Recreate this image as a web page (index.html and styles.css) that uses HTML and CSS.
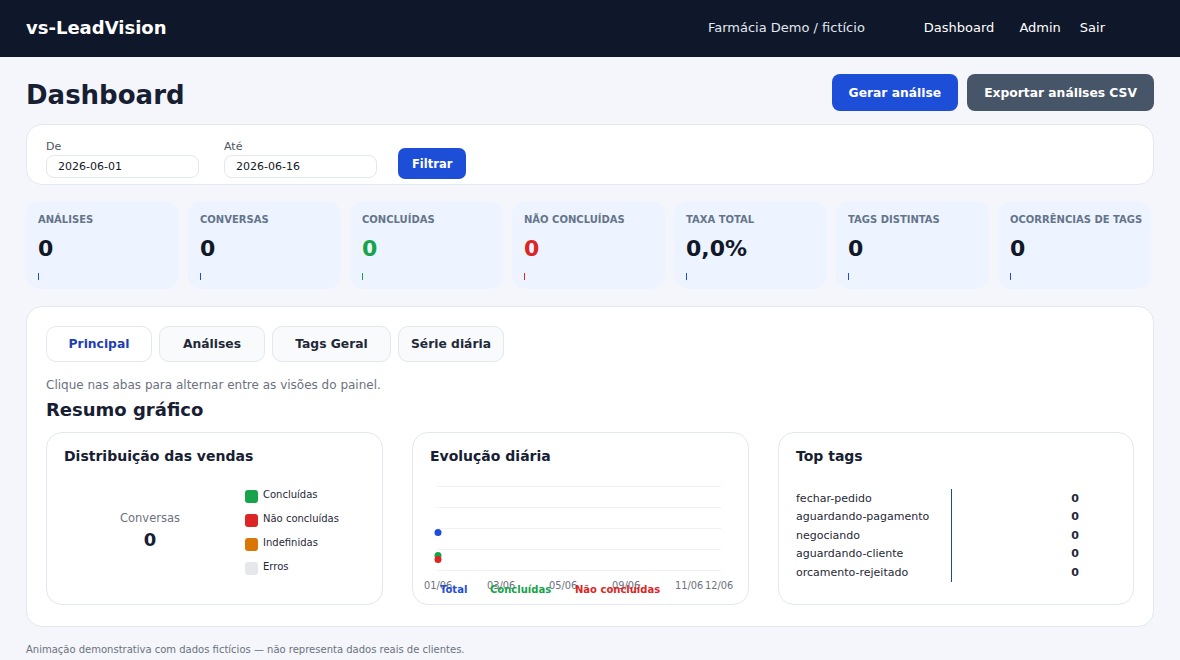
FILE: index.html
```html
<!DOCTYPE html>
<html lang="pt-BR">
<head>
    <meta charset="UTF-8">
    <meta name="viewport" content="width=device-width, initial-scale=1.0">
    <title>vs-LeadVision - Dashboard</title>
    <link rel="stylesheet" href="styles.css">
</head>
<body>
    <header class="topbar">
        <div class="brand">vs-LeadVision</div>
        <div class="tenant">Farmácia Demo / fictício</div>
        <nav class="nav">
            <a href="#">Dashboard</a>
            <a href="#">Admin</a>
            <a href="#">Sair</a>
        </nav>
    </header>

    <main class="page">
        <div class="page-head">
            <h1>Dashboard</h1>
            <div class="actions">
                <button class="btn btn-primary">Gerar análise</button>
                <button class="btn btn-dark">Exportar análises CSV</button>
            </div>
        </div>

        <form class="card filter">
            <label class="field">
                <span>De</span>
                <input type="text" value="2026-06-01">
            </label>
            <label class="field">
                <span>Até</span>
                <input type="text" value="2026-06-16">
            </label>
            <button type="button" class="btn btn-primary btn-sm">Filtrar</button>
        </form>

        <section class="stats">
            <div class="stat"><div class="stat-label">Análises</div><div class="stat-value">0</div><div class="tick blue"></div></div>
            <div class="stat"><div class="stat-label">Conversas</div><div class="stat-value">0</div><div class="tick blue"></div></div>
            <div class="stat"><div class="stat-label">Concluídas</div><div class="stat-value green">0</div><div class="tick green-bg"></div></div>
            <div class="stat"><div class="stat-label">Não concluídas</div><div class="stat-value red">0</div><div class="tick red-bg"></div></div>
            <div class="stat"><div class="stat-label">Taxa total</div><div class="stat-value">0,0%</div><div class="tick blue"></div></div>
            <div class="stat"><div class="stat-label">Tags distintas</div><div class="stat-value">0</div><div class="tick blue"></div></div>
            <div class="stat"><div class="stat-label">Ocorrências de tags</div><div class="stat-value">0</div><div class="tick blue"></div></div>
        </section>

        <section class="card panel">
            <div class="tabs">
                <button class="tab active">Principal</button>
                <button class="tab">Análises</button>
                <button class="tab tab-wide">Tags Geral</button>
                <button class="tab">Série diária</button>
            </div>
            <p class="hint">Clique nas abas para alternar entre as visões do painel.</p>
            <h2>Resumo gráfico</h2>

            <div class="charts">
                <div class="chart-card">
                    <h3>Distribuição das vendas</h3>
                    <div class="donut">
                        <div class="donut-center">
                            <div class="donut-label">Conversas</div>
                            <div class="donut-value">0</div>
                        </div>
                        <ul class="legend">
                            <li><i class="sw c-green"></i>Concluídas</li>
                            <li><i class="sw c-red"></i>Não concluídas</li>
                            <li><i class="sw c-orange"></i>Indefinidas</li>
                            <li><i class="sw c-gray"></i>Erros</li>
                        </ul>
                    </div>
                </div>

                <div class="chart-card">
                    <h3>Evolução diária</h3>
                    <svg class="line-chart" width="320" height="120" viewBox="0 0 320 120">
                        <g stroke="#eef1f5" stroke-width="1">
                            <line x1="25" y1="5.5" x2="309" y2="5.5"/>
                            <line x1="25" y1="26.5" x2="309" y2="26.5"/>
                            <line x1="25" y1="47.5" x2="309" y2="47.5"/>
                            <line x1="25" y1="68.5" x2="309" y2="68.5"/>
                            <line x1="25" y1="89.5" x2="309" y2="89.5"/>
                        </g>
                        <circle cx="26" cy="51.5" r="3.5" fill="#1d4ed8"/>
                        <circle cx="26" cy="74.5" r="3.5" fill="#16a34a"/>
                        <circle cx="26" cy="78.5" r="3.5" fill="#dc2626"/>
                        <g font-family="DejaVu Sans, sans-serif" font-size="9.8" fill="#6b7280">
                            <text x="12" y="107.5">01/06</text>
                            <text x="75" y="107.5">03/06</text>
                            <text x="137" y="107.5">05/06</text>
                            <text x="200" y="107.5">09/06</text>
                            <text x="263" y="107.5">11/06</text>
                            <text x="293" y="107.5">12/06</text>
                        </g>
                        <g font-family="DejaVu Sans, sans-serif" font-size="10" font-weight="bold">
                            <text x="28" y="111.5" fill="#1d4ed8">Total</text>
                            <text x="78" y="111.5" fill="#16a34a">Concluídas</text>
                            <text x="163" y="111.5" fill="#dc2626">Não concluídas</text>
                        </g>
                    </svg>
                </div>

                <div class="chart-card">
                    <h3>Top tags</h3>
                    <ul class="tags">
                        <li><span class="tag-name">fechar-pedido</span><span class="tag-bar"></span><span class="tag-val">0</span></li>
                        <li><span class="tag-name">aguardando-pagamento</span><span class="tag-bar"></span><span class="tag-val">0</span></li>
                        <li><span class="tag-name">negociando</span><span class="tag-bar"></span><span class="tag-val">0</span></li>
                        <li><span class="tag-name">aguardando-cliente</span><span class="tag-bar"></span><span class="tag-val">0</span></li>
                        <li><span class="tag-name">orcamento-rejeitado</span><span class="tag-bar"></span><span class="tag-val">0</span></li>
                    </ul>
                </div>
            </div>
        </section>

        <p class="footnote">Animação demonstrativa com dados fictícios — não representa dados reais de clientes.</p>
    </main>
</body>
</html>
```

FILE: styles.css
```css
* { box-sizing: border-box; }
body {
    margin: 0;
    font-family: "DejaVu Sans", sans-serif;
    background: #f4f6fb;
    color: #111827;
}

/* top bar */
.topbar {
    height: 57px;
    background: #0f172a;
    color: #fff;
    display: flex;
    align-items: center;
    padding: 0 26px 2px;
}
.brand { font-size: 18px; font-weight: bold; }
.tenant { margin-left: auto; font-size: 13px; color: #e2e8f0; }
.nav { display: flex; margin-left: 59px; margin-right: 49px; }
.nav a { color: #fff; text-decoration: none; font-size: 13px; }
.nav a + a { margin-left: 25px; }
.nav a:last-child { margin-left: 19px; }

.page { padding: 17px 26px 0; }
.page-head {
    display: flex;
    align-items: center;
    justify-content: space-between;
    height: 37px;
    margin-bottom: 13px;
}
h1 { margin: 4px 0 0; font-size: 26px; font-weight: bold; color: #172033; }
.actions { display: flex; gap: 9px; }

.btn {
    border: 0;
    border-radius: 8px;
    color: #fff;
    font-family: inherit;
    font-weight: bold;
    font-size: 12.3px;
    height: 37px;
    padding: 0 17px;
}
.btn-primary { background: #1d4ed8; }
.btn-dark { background: #475569; }

.card {
    background: #fff;
    border: 1px solid #e2e8f0;
    border-radius: 16px;
}

/* filter */
.filter {
    display: flex;
    align-items: flex-start;
    height: 61px;
    padding: 15px 19px 0;
    margin: 0;
}
.field { display: flex; flex-direction: column; margin-right: 25px; }
.field span { font-size: 11px; line-height: 13px; color: #4b5563; margin-bottom: 2px; }
.field input {
    width: 153px;
    height: 23px;
    border: 1px solid #e2e8f0;
    border-radius: 8px;
    padding: 0 11px;
    font-family: inherit;
    font-size: 11px;
    color: #111827;
    background: #fff;
}
.btn-sm {
    height: 31px;
    font-size: 11.5px;
    padding: 0 14px;
    border-radius: 7px;
    margin: 8px 0 0 -4px;
}

/* stats */
.stats {
    display: grid;
    grid-template-columns: repeat(7, 153px);
    gap: 9px;
    margin: 16px 0 17px;
}
.stat {
    background: #eef4ff;
    border-radius: 14px;
    height: 88px;
    padding: 13px 12px 0;
}
.stat-label {
    font-size: 10px;
    font-weight: bold;
    color: #64748b;
    text-transform: uppercase;
    white-space: nowrap;
}
.stat-value { font-size: 22px; font-weight: bold; margin-top: 11px; color: #111827; }
.tick { width: 1px; height: 7px; margin-top: 12px; }
.blue { background: #1d4ed8; }
.green { color: #16a34a; }
.red { color: #dc2626; }
.green-bg { background: #16a34a; }
.red-bg { background: #dc2626; }

/* panel */
.panel { padding: 19px 19px 21px; }
.tabs { display: flex; gap: 7px; }
.tab {
    width: 106px;
    height: 36px;
    border: 1px solid #e2e8f0;
    border-radius: 10px;
    background: #f8fafc;
    color: #1f2937;
    font-family: inherit;
    font-weight: bold;
    font-size: 12.3px;
    padding: 0;
}
.tab-wide { width: 119px; }
.tab.active { background: #fff; color: #1e40af; }
.hint { margin: 16px 0 0; font-size: 12px; color: #6b7280; }
h2 { margin: 7px 0 12px; font-size: 18px; font-weight: bold; color: #172033; }

.charts {
    display: grid;
    grid-template-columns: 337px 337px 1fr;
    gap: 29px;
}
.chart-card {
    border: 1px solid #e2e8f0;
    border-radius: 16px;
    height: 173px;
    padding: 15px 17px 0;
}
h3 { margin: 0; font-size: 14px; font-weight: bold; color: #172033; }

.donut { display: flex; align-items: flex-start; margin-top: 18px; }
.donut-center { width: 172px; text-align: center; padding-top: 29px; }
.donut-label { font-size: 11.5px; color: #6b7280; }
.donut-value { font-size: 18px; font-weight: bold; margin-top: 4px; color: #172033; }
.legend { list-style: none; margin: 0; padding: 0 0 0 9px; }
.legend li { display: flex; align-items: center; height: 24px; font-size: 10px; color: #1f2937; }
.sw { width: 13px; height: 13px; border-radius: 3px; margin-right: 5px; position: relative; top: 2px; }
.c-green { background: #16a34a; }
.c-red { background: #dc2626; }
.c-orange { background: #d97706; }
.c-gray { background: #e5e7eb; }

.line-chart { display: block; margin: 17px 0 0 -18px; overflow: visible; }

.tags { list-style: none; margin: 25px 0 0; padding: 0; }
.tags li { display: flex; align-items: center; height: 18.5px; font-size: 11px; color: #1f2937; }
.tag-name { width: 155px; }
.tag-bar { width: 1px; height: 18.5px; background: #1e4f7a; }
.tag-val { margin-left: auto; margin-right: 37px; font-weight: bold; font-size: 11px; }

.footnote { margin: 17px 0 0; font-size: 10px; color: #6b7280; }
```
